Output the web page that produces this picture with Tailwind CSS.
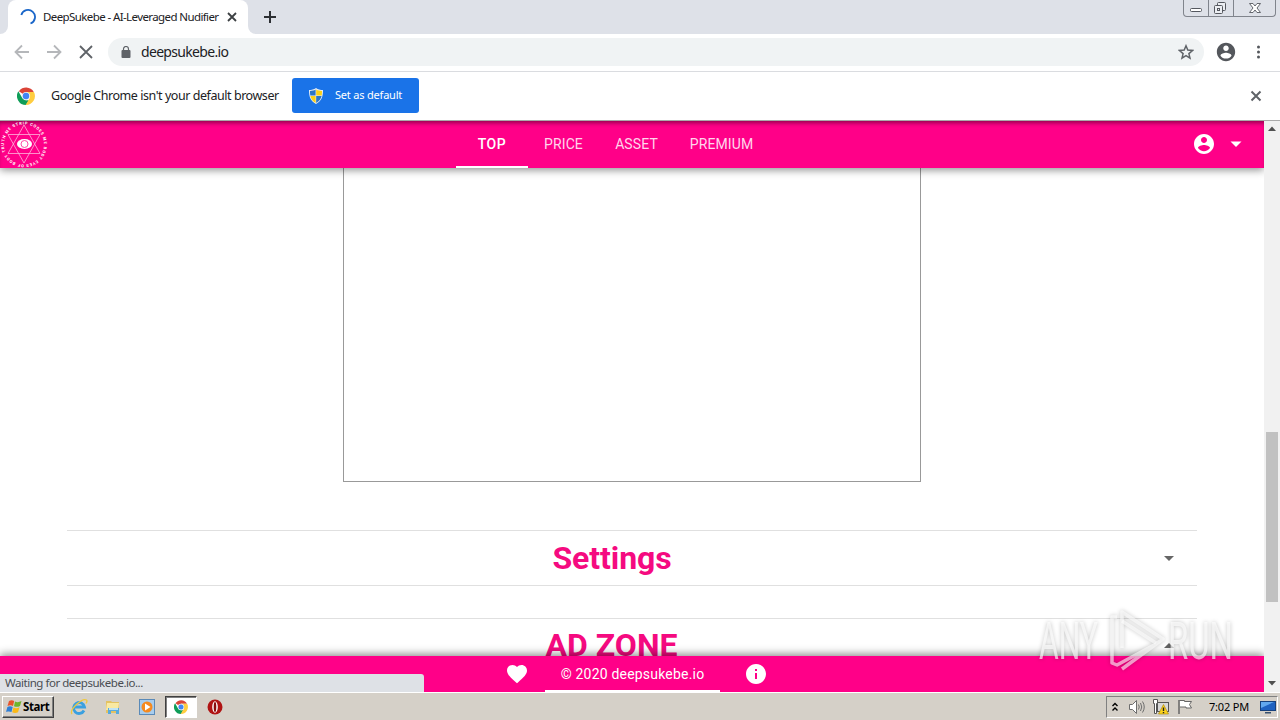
<!DOCTYPE html>
<html lang="en">
  <head>
    <meta charset="UTF-8" />
    <meta name="viewport" content="width=device-width, initial-scale=1.0" />
    <title>DeepSukebe</title>
    <script src="https://cdn.jsdelivr.net/npm/@tailwindcss/browser@4"></script>
  </head>
  <body class="w-[1280px] h-[720px] overflow-hidden bg-white font-['Noto_Sans',sans-serif] text-[#202124]">
    <div class="relative flex flex-col w-full h-full">
      <!-- Tab strip -->
      <div class="flex h-[34px] shrink-0 bg-[#dee1e8]">
        <div class="w-2 bg-white"><div class="h-full rounded-br-lg bg-[#dee1e8]"></div></div>
        <div class="flex items-center w-60 h-full bg-white rounded-t-lg pl-3">
          <svg class="w-4 h-4 shrink-0" viewBox="0 0 16 16" fill="none" stroke="#1a66c9" stroke-width="1.800">
            <path d="M1.300 6A7 7 0 1 1 10.500 14.500" />
          </svg>
          <p class="ml-[7px] w-[181px] text-[11.5px] tracking-[-0.6px] whitespace-nowrap">DeepSukebe - AI-Leveraged Nudifier</p>
          <svg class="w-4 h-4" viewBox="0 0 16 16" stroke="#3c4043" stroke-width="1.8">
            <path d="M4 4l8 8M12 4l-8 8" />
          </svg>
        </div>
        <div class="w-2 bg-white"><div class="h-full rounded-bl-lg bg-[#dee1e8]"></div></div>
        <svg class="w-4 h-4 mt-[9px] ml-[6px]" viewBox="0 0 16 16" stroke="#2c2f33" stroke-width="2">
          <path d="M8 2v12M2 8h12" />
        </svg>
        <div class="ml-auto mr-1 flex w-[93px] h-[17px] border border-t-0 border-[#80848c] rounded-b-[4px]">
          <div class="w-[25px] border-r border-[#80848c]">
            <svg class="w-6 h-4" viewBox="0 0 24 16" fill="#fff" stroke="#55585f">
              <rect x="6.500" y="8.500" width="11" height="3" rx="1" />
            </svg>
          </div>
          <div class="w-[25px] border-r border-[#80848c]">
            <svg class="w-6 h-4" viewBox="0 0 24 16" fill="#eceef2" stroke="#55585f">
              <rect x="8.500" y="2.500" width="8" height="8" rx="1" />
              <rect x="5.500" y="5.500" width="8" height="8" rx="1" />
              <rect x="8.500" y="8.500" width="2" height="2" />
            </svg>
          </div>
          <svg class="w-[41px] h-4" viewBox="0 0 41 16" fill="#fff" stroke="#55585f" stroke-width=".9">
            <path d="M15.500 3.500h3.500l2 2.500 2-2.500h3.500l-3.500 4.500 3.500 4.500h-3.500l-2-2.500-2 2.500h-3.500l3.500-4.500z" />
          </svg>
        </div>
      </div>

      <!-- Toolbar -->
      <div class="flex items-center h-[38px] shrink-0 pl-[14px] pr-[14px] pb-[1px] border-b border-[#dadce0]">
        <svg class="w-4 h-4" viewBox="0 0 16 16" fill="none" stroke="#b5b7ba" stroke-width="1.8"><path d="M15 8H2M8 1.500L1.500 8 8 14.500" /></svg>
        <svg class="w-4 h-4 ml-4" viewBox="0 0 16 16" fill="none" stroke="#b5b7ba" stroke-width="1.8"><path d="M1 8h13M8 1.500L14.500 8 8 14.500" /></svg>
        <svg class="w-4 h-4 ml-4" viewBox="0 0 16 16" stroke="#5f6368" stroke-width="1.8"><path d="M2 2l12 12M14 2L2 14" /></svg>
        <div class="flex items-center w-[1096px] h-7 ml-[14px] px-[13px] rounded-full bg-[#f0f3f4]">
          <svg class="w-[10px] h-3" viewBox="0 0 10 12" fill="#5f6368">
            <rect x="0.500" y="4" width="9" height="8" rx="1" />
            <path d="M2.500 5V3a2.500 2.500 0 0 1 5 0v2" fill="none" stroke="#5f6368" stroke-width="1.200" />
          </svg>
          <p class="ml-[10px] text-[14px] tracking-[-0.68px] leading-5">deepsukebe.io</p>
          <svg class="w-4 h-4 ml-auto -mr-[3px]" viewBox="0 0 16 16" fill="none" stroke="#5f6368" stroke-width="1.500">
            <path d="M8 1.800l1.800 4.300 4.700.4-3.600 3.100 1.100 4.500L8 11.700l-4 2.400 1.100-4.500-3.600-3.100 4.700-.4z" />
          </svg>
        </div>
        <svg class="w-[22px] h-[22px] ml-[11px]" viewBox="0 0 24 24" fill="#54575c">
          <path d="M12 2C6.480 2 2 6.480 2 12s4.480 10 10 10 10-4.480 10-10S17.520 2 12 2zm0 3c1.660 0 3 1.340 3 3s-1.340 3-3 3-3-1.340-3-3 1.340-3 3-3zm0 14.200c-2.500 0-4.710-1.280-6-3.220.03-1.990 4-3.080 6-3.080s5.970 1.090 6 3.080c-1.290 1.940-3.500 3.220-6 3.220z" />
        </svg>
        <svg class="w-4 h-4 ml-auto" viewBox="0 0 16 16" fill="#54575c">
          <circle cx="8.500" cy="3" r="1.500" /><circle cx="8.500" cy="8" r="1.500" /><circle cx="8.500" cy="13" r="1.500" />
        </svg>
      </div>

      <!-- Default browser bar -->
      <div class="flex items-center h-[49px] shrink-0 pl-[17px] pr-4 pb-[1px] border-b border-[#aaa]">
        <svg class="w-[18px] h-[18px]" viewBox="0 0 24 24">
          <path fill="#db4437" d="M12 12L2.500 5.500A11.800 11.800 0 0 1 22.300 6.500H12z" />
          <path fill="#0f9d58" d="M12 24A12 12 0 0 1 1.800 5.700L7.200 15l4.800 2.500h4z" />
          <path fill="#ffcd40" d="M12 6.500h10.600A12 12 0 0 1 11.500 24L17 14.500z" />
          <circle cx="12" cy="12" r="5.500" fill="#f1f1f1" />
          <circle cx="12" cy="12" r="4.300" fill="#4285f4" />
        </svg>
        <p class="w-[241px] pl-4 pt-[2px] text-[12.5px] tracking-[-0.45px] whitespace-nowrap">Google Chrome isn't your default browser</p>
        <button class="flex items-center w-[127px] h-[35px] ml-4 pl-[17px] rounded-[3px] bg-[#1a73e8] text-white text-[11px]">
          <svg class="w-[14px] h-4 shrink-0" viewBox="0 0 14 16">
            <path fill="#e8eef5" d="M7 0c2 1.500 4.500 2 7 2 0 7-1.500 11-7 14C1.500 13 0 9 0 2c2.500 0 5-.5 7-2z" />
            <path fill="#2c75c7" d="M6.600 1.500v6H1.300C1 5.500 1 4.500 1 3c2.200-.1 4-.5 5.600-1.500z" />
            <path fill="#fcd116" d="M7.200 1.500v6h5.500c.3-2 .3-3 .3-4.500-2.200-.1-4.200-.5-5.800-1.500zM6.600 8H1.400c.7 3 2.200 5.200 5.200 7z" />
            <path fill="#2c75c7" d="M7.200 8h5.400c-.7 3-2.400 5.200-5.400 7z" />
          </svg>
          <span class="ml-3 whitespace-nowrap tracking-[-0.2px]">Set as default</span>
        </button>
        <svg class="w-4 h-4 ml-auto" viewBox="0 0 16 16" stroke="#5f6368" stroke-width="2"><path d="M3.500 3.500l9 9M12.500 3.500l-9 9" /></svg>
      </div>

      <!-- Page -->
      <div class="flex h-[571px] shrink-0 font-[Roboto,sans-serif]">
        <div class="flex flex-col w-[1264px] h-full overflow-hidden">
          <header class="relative z-10 flex items-center h-[47px] shrink-0 bg-[#ff0088] text-[#ffd6ec] shadow-[0_2px_8px_rgba(0,0,0,0.45),inset_0_4px_4px_-2px_rgba(60,0,30,0.55)]">
            <svg class="w-12 h-[47px]" viewBox="0 0 48 47" fill="none" stroke="#ffb3da" stroke-width=".8">
              <defs><path id="ring" d="M24 43.500a20 20 0 1 1 .1 0" /></defs>
              <path d="M24 4L40 32.500H8zM24 42L8 13.500h32z" />
              <ellipse cx="24.500" cy="23" rx="7.500" ry="5" fill="#fff" stroke="none" />
              <circle cx="24.500" cy="23" r="3.500" stroke="#ff4aa9" stroke-width="1" />
              <text fill="#fff" stroke="none" font-size="4" font-weight="700"><textPath href="#ring" textLength="123">OF BODY TRUTH ME STRIP CODES ME BODY EYES</textPath></text>
            </svg>
            <nav class="flex h-full ml-[408px] text-sm tracking-[0.1px]">
              <a class="flex items-center justify-center w-[72px] pt-[1px] border-b-2 border-white font-medium text-white tracking-[0.6px]">TOP</a>
              <a class="flex items-center justify-center w-[71px] pb-[1px]">PRICE</a>
              <a class="flex items-center justify-center w-[75px] pb-[1px]">ASSET</a>
              <a class="flex items-center justify-center w-[95px] pb-[1px]">PREMIUM</a>
            </nav>
            <svg class="w-6 h-6 ml-auto mb-[2px]" viewBox="0 0 24 24" fill="#fff">
              <path d="M12 2C6.480 2 2 6.480 2 12s4.480 10 10 10 10-4.480 10-10S17.520 2 12 2zm0 3c1.660 0 3 1.340 3 3s-1.340 3-3 3-3-1.340-3-3 1.340-3 3-3zm0 14.200c-2.500 0-4.710-1.280-6-3.220.03-1.990 4-3.080 6-3.080s5.970 1.090 6 3.080c-1.290 1.940-3.500 3.220-6 3.220z" />
            </svg>
            <svg class="w-6 h-6 ml-2 mr-4 mb-[2px]" viewBox="0 0 24 24" fill="#fff"><path d="M6.500 9.500L12 15l5.500-5.500z" /></svg>
          </header>

          <main class="flex flex-col h-[488px] shrink-0 overflow-hidden px-[67px]">
            <div class="w-[578px] h-[314px] shrink-0 ml-[276px] border border-t-0 border-[#999]"></div>
            <div class="flex items-center h-14 shrink-0 mt-12 border-y border-[#e0e0e0]">
              <h2 class="w-[1090px] text-center text-[32px] font-bold text-[#f50a80] leading-none tracking-[-0.1px]">Settings</h2>
              <svg class="w-6 h-6" viewBox="0 0 24 24" fill="#666"><path d="M7 10l5 5 5-5z" /></svg>
            </div>
            <div class="flex items-center h-14 shrink-0 mt-8 border-y border-[#e0e0e0]">
              <h2 class="w-[1089px] mr-[1px] pb-[2px] text-center text-[32px] font-bold text-[#f50a80] leading-none">AD ZONE</h2>
              <svg class="w-6 h-6" viewBox="0 0 24 24" fill="#666"><path d="M7 14l5-5 5 5z" /></svg>
            </div>
          </main>

          <footer class="relative z-10 flex h-9 shrink-0 items-center pl-[505px] bg-[#ff0088] text-white text-sm shadow-[0_-2px_8px_rgba(0,0,0,0.45)]">
            <svg class="w-6 h-6" viewBox="0 0 24 24" fill="#fff">
              <path d="M12 21.350l-1.450-1.320C5.400 15.360 2 12.280 2 8.500 2 5.420 4.420 3 7.500 3c1.740 0 3.410.81 4.500 2.090C13.090 3.810 14.760 3 16.500 3 19.580 3 22 5.420 22 8.500c0 3.780-3.400 6.860-8.550 11.540L12 21.350z" />
            </svg>
            <p class="flex items-center justify-center w-[175px] h-full ml-4 pt-[2px] border-b-2 border-white tracking-[0.2px]">© 2020 deepsukebe.io</p>
            <svg class="w-6 h-6 ml-6" viewBox="0 0 24 24" fill="#fff">
              <path d="M12 2C6.480 2 2 6.480 2 12s4.480 10 10 10 10-4.480 10-10S17.520 2 12 2zm1 15h-2v-6h2v6zm0-8h-2V7h2v2z" />
            </svg>
          </footer>
        </div>
        <!-- Scrollbar -->
        <div class="flex flex-col items-center w-4 h-full bg-[#f1f1f1]">
          <svg class="w-4 h-4" viewBox="0 0 16 16" fill="#505050"><path d="M4 10l4-4.500 4 4.500z" /></svg>
          <div class="w-3 h-[170px] mt-[295px] bg-[#c1c1c1]"></div>
          <svg class="w-4 h-4 mt-auto" viewBox="0 0 16 16" fill="#505050"><path d="M4 5l4 4.500L12 5z" /></svg>
        </div>
      </div>

      <!-- Taskbar -->
      <div class="flex items-center h-7 shrink-0 pl-[2px] pr-[2px] pt-[1px] bg-[#d5d0c8] border-t border-white">
        <button class="flex items-center w-[52px] h-[22px] pl-[2px] bg-[#d5d0c8] border border-t-white border-l-white border-r-[#404040] border-b-[#404040] shadow-[inset_-1px_-1px_0_#808080]">
          <svg class="w-[18px] h-4 shrink-0" viewBox="-1 0 17 16">
            <path fill="#e8542b" d="M2.500 2C4.500.800 6 1 7.700 2L6.500 7C5 6 3 6 1 7z" />
            <path fill="#6fb52c" d="M8.500 2.500C10.500 3.500 12.500 3.300 15 2l-1.500 5c-2 1-4 1.200-6 .2z" />
            <path fill="#2f7fd6" d="M.9 8C2.500 7 4.500 7 6.200 8L5 13C3.300 12 0 12.500-.5 13z" />
            <path fill="#fbb916" d="M7 8.500c2 1 4 .8 6-.2l-1.500 5c-2 1-4 1-5.800 0z" />
          </svg>
          <span class="text-[11.5px] font-bold text-black tracking-[-0.4px]">Start</span>
        </button>
        <svg class="w-[18px] h-[18px] ml-[16px]" viewBox="0 0 18 18" fill="none">
          <path d="M14 12.500A5.500 5.500 0 1 1 14.500 9H5" stroke="#3aa0e0" stroke-width="2.800" />
          <path d="M2 16C-1 12 12-.500 16.500 2c1 .8.500 2-.5 3.500" stroke="#f0c83c" stroke-width="1.300" />
        </svg>
        <svg class="w-4 h-4 ml-[17px]" viewBox="0 0 16 16">
          <path fill="#e3c262" d="M1 2h5l1 1h7v11H1z" />
          <path fill="#f9e9a3" d="M2 4h12l-1 7H1z" />
          <path fill="#58aadd" d="M3 9h11v6h-3v-3H6v3H3z" />
          <path fill="#bfe3f6" d="M4 9h9v2H4z" />
        </svg>
        <svg class="w-4 h-4 ml-[18px]" viewBox="0 0 16 16">
          <rect x=".5" y=".5" width="15" height="15" fill="#a7cdee" stroke="#5a8ab8" />
          <circle cx="8" cy="8" r="5.500" fill="#f58a1f" />
          <path fill="#fff" d="M6 4.500L11.500 8 6 11.500z" />
        </svg>
        <div class="flex items-center justify-center w-8 h-[22px] ml-[10px] bg-white border border-t-[#404040] border-l-[#404040] border-r-white border-b-white shadow-[inset_1px_1px_0_#808080]">
          <svg class="w-[14px] h-[14px]" viewBox="0 0 24 24">
            <path fill="#db4437" d="M12 12L2.500 5.500A11.800 11.800 0 0 1 22.300 6.500H12z" />
            <path fill="#0f9d58" d="M12 24A12 12 0 0 1 1.800 5.700L7.200 15l4.800 2.500h4z" />
            <path fill="#ffcd40" d="M12 6.500h10.600A12 12 0 0 1 11.500 24L17 14.500z" />
            <circle cx="12" cy="12" r="5.500" fill="#f1f1f1" />
            <circle cx="12" cy="12" r="4.300" fill="#4285f4" />
          </svg>
        </div>
        <svg class="w-4 h-4 ml-[10px]" viewBox="0 0 16 16">
          <circle cx="8" cy="8" r="7.500" fill="#b01313" />
          <ellipse cx="8" cy="8" rx="2.800" ry="5.800" fill="#fff" />
          <ellipse cx="8" cy="8" rx="1.300" ry="5" fill="#8a0c0c" />
        </svg>
        <div class="flex items-center w-[172px] h-[22px] ml-auto pl-1 border border-t-[#808080] border-l-[#808080] border-r-white border-b-white">
          <svg class="w-2 h-3" viewBox="0 0 8 12" fill="none" stroke="#000" stroke-width="1.400"><path d="M1.500 5L4 2.500 6.500 5M1.500 9.500L4 7l2.500 2.500" /></svg>
          <svg class="w-4 h-4 ml-[10px]" viewBox="0 0 16 16" fill="#fff" stroke="#6d6d6d">
            <path d="M.5 5.500h3l4-4v13l-4-4h-3z" />
            <path fill="none" d="M9.500 5.500q1.500 2.500 0 5M11.500 4q2.500 4 0 8M13.500 2.500q3.500 5.500 0 11" />
          </svg>
          <svg class="w-4 h-4 ml-2" viewBox="0 0 16 16">
            <rect x="4.500" y="3.500" width="11" height="9" fill="#d8d8d8" stroke="#555" />
            <path fill="#fff" stroke="#555" d="M.5.500h4v4h-1v10h-2v-10h-1z" />
            <path fill="#fbd21c" stroke="#a98300" stroke-width=".6" d="M10.500 5.500l5 9.500h-10z" />
            <path stroke="#222" stroke-width="1.400" d="M10.500 8.500v3.500M10.500 13v1.300" />
          </svg>
          <svg class="w-4 h-4 ml-2" viewBox="0 0 16 16" fill="#fff" stroke="#666">
            <path d="M2.500 1.500h5v1h7l-2 3 2 3.500h-5.500v-1H3" />
            <path fill="none" stroke-width="1.500" d="M2 1v14" />
          </svg>
          <p class="ml-4 w-[42px] text-[11px] text-black whitespace-nowrap tracking-[-0.2px]">7:02 PM</p>
          <svg class="w-4 h-4 ml-[9px]" viewBox="0 0 16 16">
            <rect x=".5" y="2.500" width="15" height="9" fill="#1f62c0" stroke="#17417c" />
            <path fill="#62a8ee" d="M1 3h13L1 9z" />
            <path fill="#37506e" d="M5 13h6v1.500H5z" />
          </svg>
        </div>
      </div>

      <!-- Status bubble -->
      <div class="absolute z-20 left-0 top-[674px] flex items-center w-[424px] h-[18px] pl-[5px] rounded-tr-[3px] bg-[#dee1e6] text-[#4a4d52] text-[11.5px] tracking-[-0.47px]">Waiting for deepsukebe.io...</div>

      <!-- Watermark -->
      <svg class="absolute z-30 left-[1030px] top-[600px] w-[210px] h-20 font-[Roboto,sans-serif] drop-shadow-[0_0_2px_rgba(0,0,0,0.35)]" viewBox="0 0 210 80">
        <g fill="#fff" fill-opacity=".65" font-size="51">
          <text x="9" y="59" textLength="59" lengthAdjust="spacingAndGlyphs">ANY</text>
          <text x="138" y="59" textLength="65" lengthAdjust="spacingAndGlyphs">RUN</text>
        </g>
        <g fill="none" stroke="#fff" stroke-opacity=".6" stroke-width="3.500" stroke-linejoin="round">
          <path d="M87 17h-5v46l5 2 37-20M92 48V12l41 27-41 30" />
          <path d="M92 21l34 22" />
        </g>
      </svg>
    </div>
  </body>
</html>
